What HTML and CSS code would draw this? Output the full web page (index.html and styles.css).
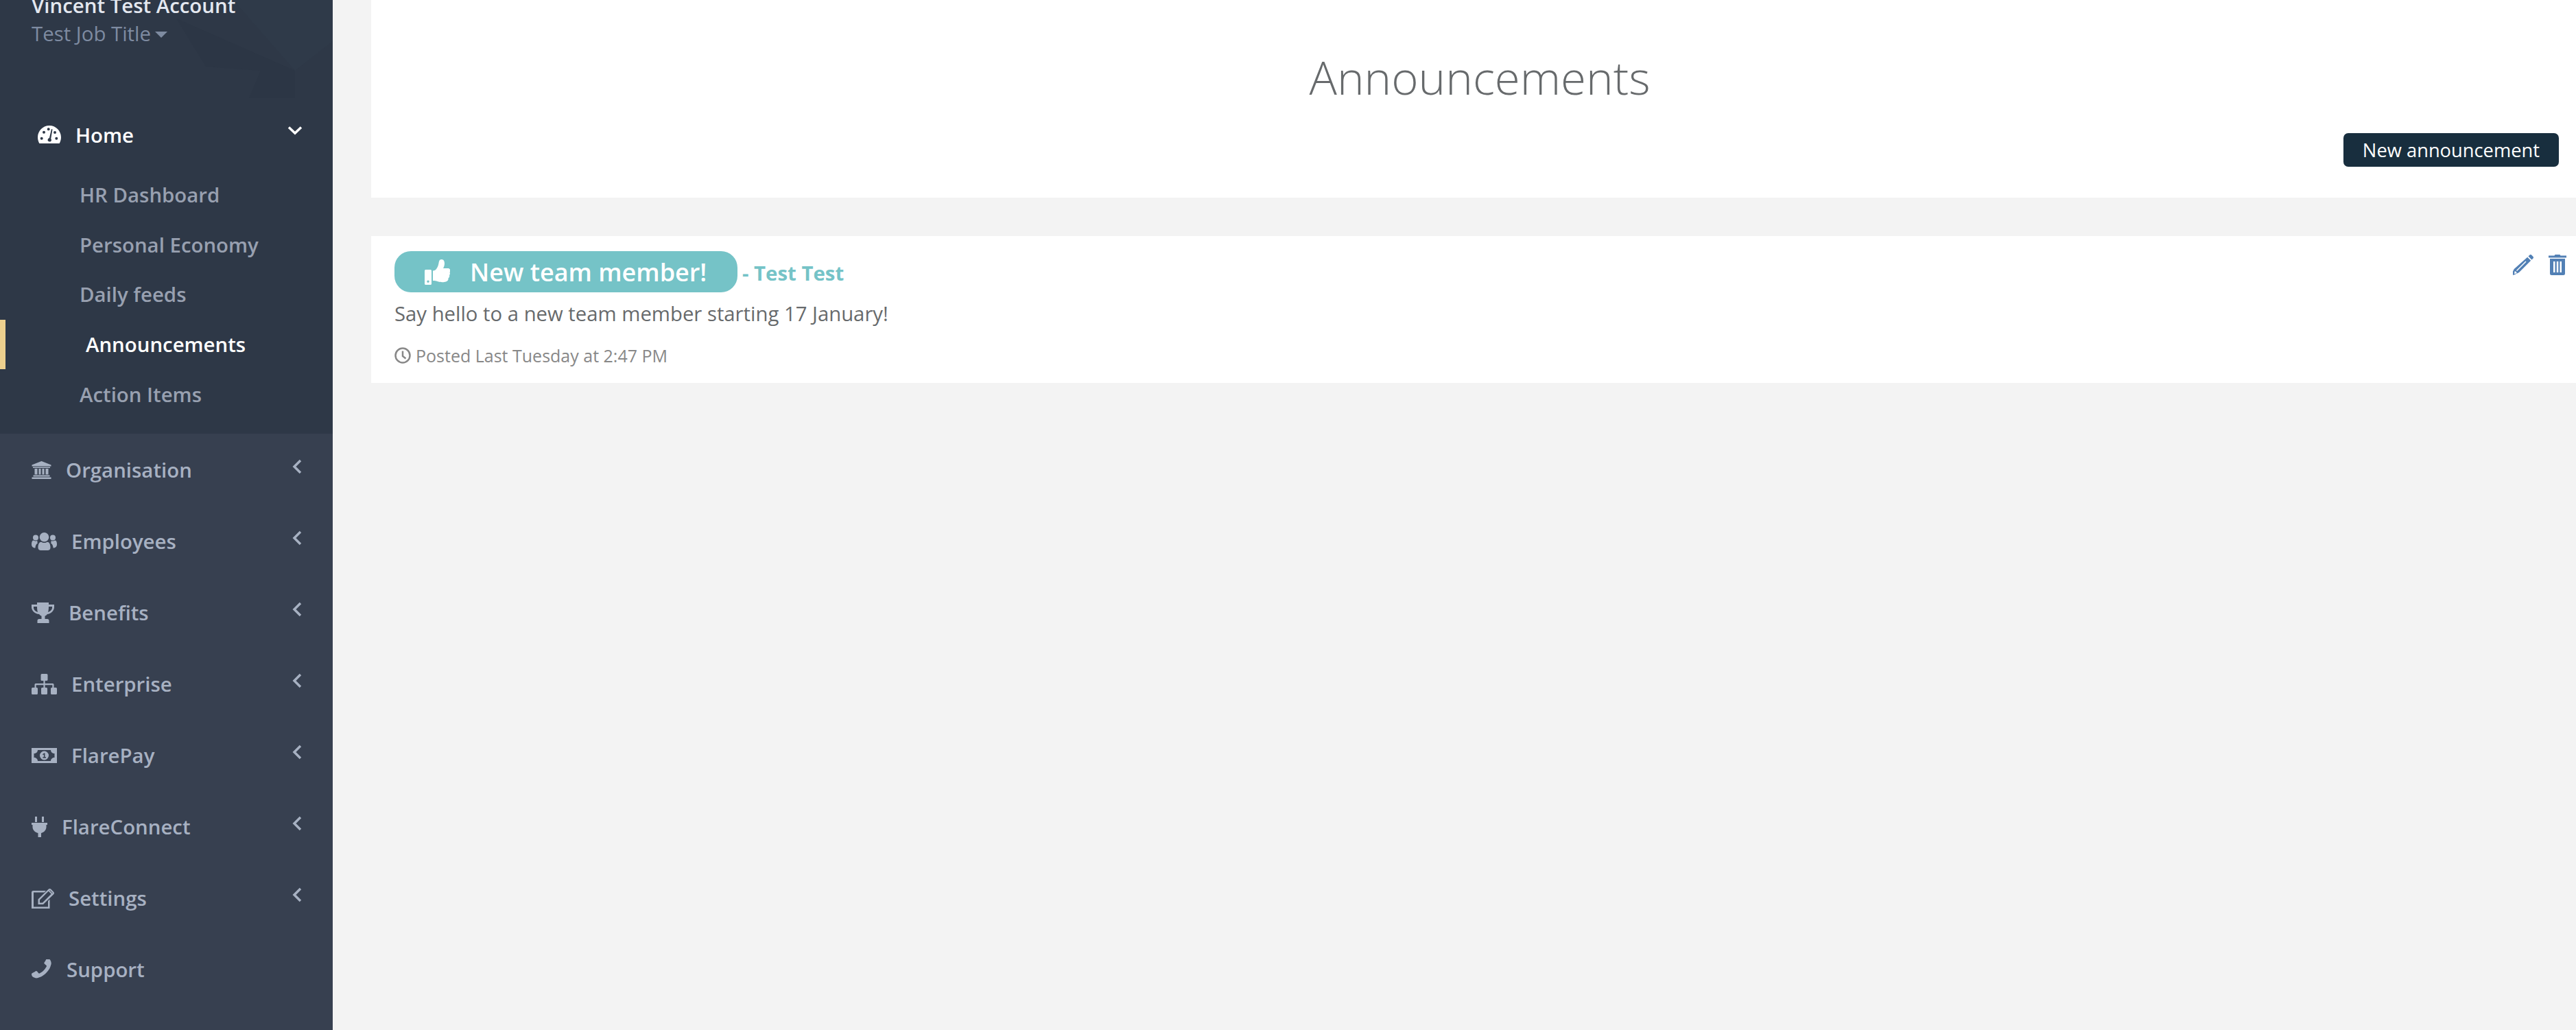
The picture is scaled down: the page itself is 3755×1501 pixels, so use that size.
FILE: index.html
```html
<!DOCTYPE html>
<html lang="en">
<head>
<meta charset="utf-8">
<title>Announcements</title>
<link rel="stylesheet" href="styles.css">
</head>
<body>
<div class="app">
  <aside class="sidebar">
    <div class="sidebar-top">
      <svg class="deco" viewBox="0 0 485 150" aria-hidden="true">
        <polygon points="257,27 430,103 430,143 363,143 380,103 300,97" fill="#2c3645"/>
        <polygon points="340,0 430,103 485,60 485,0" fill="#2f3a49"/>
      </svg>
      <div class="profile">
        <div class="profile-name">Vincent Test Account</div>
        <div class="profile-job">Test Job Title<span class="caret"></span></div>
      </div>
      <a class="home-row">
        <svg class="home-icon" viewBox="0 0 34 26"><path fill-rule="evenodd" d="M17 0C7.6 0 0 7.6 0 17c0 3.3.9 6.4 2.4 9h29.2c1.5-2.6 2.4-5.7 2.4-9C34 7.600 26.400 0 17 0zM15.700 3.300a2 2 0 1 1 0 4 2 2 0 0 1 0-4zM9 7.700a2 2 0 1 1 0 4 2 2 0 0 1 0-4zM5.700 16.700a2 2 0 1 1 0 4 2 2 0 0 1 0-4zM27.300 16.700a2 2 0 1 1 0 4 2 2 0 0 1 0-4zM25 8a2 2 0 1 1 0 4 2 2 0 0 1 0-4zM20 5l1.500.4-2.300 13.800c.8.8 1 2 .5 3-.7 1.300-2.600 1.700-3.900.9-1.300-.8-1.600-2.500-.8-3.700.4-.7 1.100-1.100 1.900-1.200z"/></svg>
        <span class="home-label">Home</span>
        <svg class="chev-down" viewBox="0 0 22 14"><path d="M2 2.500l9 8.500 9-8.500"/></svg>
      </a>
      <nav class="subnav">
        <a class="sub-item">HR Dashboard</a>
        <a class="sub-item">Personal Economy</a>
        <a class="sub-item">Daily feeds</a>
        <a class="sub-item sub-item-active">Announcements</a>
        <a class="sub-item">Action Items</a>
      </nav>
    </div>
    <nav class="mainnav">
      <a class="nav-item">
        <svg class="icon icon-bank" viewBox="0 0 28 26"><path d="M14 0l14 5.500V7.500H0V5.500zM1.500 8.500h25v1.500h-25zM4 11h4v8.500H4zM10 11h3v8.500h-3zM15 11h3v8.500h-3zM20 11h4v8.500h-4zM2 20.500h24v2H2zM0 23.500h28V26H0z"/></svg>
        <span>Organisation</span>
        <svg class="chev-left" viewBox="0 0 14 22"><path d="M12 2L3 11l9 9"/></svg>
      </a>
      <a class="nav-item">
        <svg class="icon icon-users" viewBox="0 0 37 26"><circle cx="18.500" cy="6.800" r="6.800"/><path d="M9.500 22c0-5 1.800-8.300 4.600-8.300 1.300.9 2.800 1.400 4.400 1.400s3.100-.5 4.400-1.400c2.800 0 4.600 3.300 4.600 8.300 0 2.600-1.700 4-4 4H13.500c-2.300 0-4-1.400-4-4z"/><circle cx="6" cy="7.500" r="4"/><circle cx="31" cy="7.500" r="4"/><path d="M0 17c0-3.500 1-5.500 3-5.500 1 .7 2 1 3 1 1 0 1.600-.2 2.700-.8-.6 1.400-.4 2.700.3 3.800-2 1-3.300 3.200-3.600 7C2.500 22.500 0 21 0 17zM37 17c0-3.500-1-5.500-3-5.500-1 .7-2 1-3 1-1 0-1.600-.2-2.700-.8.600 1.400.400 2.700-.3 3.800 2 1 3.300 3.200 3.600 7 2.900 0 5.400-1.500 5.400-5.500z"/></svg>
        <span>Employees</span>
        <svg class="chev-left" viewBox="0 0 14 22"><path d="M12 2L3 11l9 9"/></svg>
      </a>
      <a class="nav-item">
        <svg class="icon icon-trophy" viewBox="0 0 33 30"><path fill-rule="evenodd" d="M8 0h17v3h8v4c0 5-5 9.500-10 10-1 1.300-2.200 2.200-3.500 2.800V24h3.500c1.500 0 2.500 1 2.500 2.500V30H8.500v-3.500C8.500 25 9.500 24 11 24h3.500v-4.200C13.200 19.200 12 18.300 11 17 5 16.500 0 12 0 7V3h8zM3 6v1.500c0 3 2.500 5.500 6 6.500-.7-2.300-1-5-1-8zM30 6h-5c0 3-.3 5.700-1 8 3.500-1 6-3.500 6-6.500z"/></svg>
        <span>Benefits</span>
        <svg class="chev-left" viewBox="0 0 14 22"><path d="M12 2L3 11l9 9"/></svg>
      </a>
      <a class="nav-item">
        <svg class="icon icon-sitemap" viewBox="0 0 37 30"><path d="M13.500 1.500A1.500 1.500 0 0 1 15 0h7a1.500 1.500 0 0 1 1.500 1.500v7A1.500 1.500 0 0 1 22 10h-2.400v4H31a1.500 1.500 0 0 1 1.500 1.500V20H30.300v-3.800h-10.700V20h-2.200v-3.800H6.700V20H4.500v-4.500A1.500 1.500 0 0 1 6 14h11.400v-4H15a1.500 1.500 0 0 1-1.500-1.500zM0 21.500A1.500 1.500 0 0 1 1.500 20h6A1.500 1.500 0 0 1 9 21.500v7A1.500 1.500 0 0 1 7.500 30h-6A1.500 1.500 0 0 1 0 28.500zM14 21.500a1.500 1.500 0 0 1 1.500-1.500h6a1.500 1.500 0 0 1 1.500 1.500v7a1.500 1.500 0 0 1-1.500 1.500h-6a1.500 1.500 0 0 1-1.500-1.500zM28 21.500a1.500 1.500 0 0 1 1.500-1.500h6a1.500 1.500 0 0 1 1.500 1.500v7a1.500 1.500 0 0 1-1.500 1.500h-6a1.500 1.500 0 0 1-1.500-1.500z"/></svg>
        <span>Enterprise</span>
        <svg class="chev-left" viewBox="0 0 14 22"><path d="M12 2L3 11l9 9"/></svg>
      </a>
      <a class="nav-item">
        <svg class="icon icon-money" viewBox="0 0 37 22"><path fill-rule="evenodd" d="M0 0h37v22H0zM9 3c0 3-2.500 5-5.500 5v6c3 0 5.500 2 5.500 5h19c0-3 2.500-5 5.500-5V8c-3 0-5.500-2-5.500-5z"/><path fill-rule="evenodd" d="M18.500 4.500a6.500 6.500 0 1 1 0 13 6.500 6.500 0 0 1 0-13zM19.500 7.500h-1.300l-2.200 1.700.8 1.100 1.100-.8v3.800h-1.500v1.400h4.600v-1.400h-1.500z"/></svg>
        <span>FlarePay</span>
        <svg class="chev-left" viewBox="0 0 14 22"><path d="M12 2L3 11l9 9"/></svg>
      </a>
      <a class="nav-item">
        <svg class="icon icon-plug" viewBox="0 0 23 30"><path d="M5 0h3v8H5zM15 0h3v8h-3zM0 9h23v3h-1.500v3c0 4.500-3.300 8.200-7.500 8.900V30H9.500v-6.100C5 23.200 1.500 19.500 1.500 15v-3H0z"/></svg>
        <span>FlareConnect</span>
        <svg class="chev-left" viewBox="0 0 14 22"><path d="M12 2L3 11l9 9"/></svg>
      </a>
      <a class="nav-item">
        <svg class="icon icon-edit" viewBox="0 0 33 29"><path fill-rule="evenodd" d="M2.500 3H21l-2.500 2.500H3V26.500h21V18l2.500-2.500V29H0V5.500A2.500 2.500 0 0 1 2.500 3zM26.500 0c.7 0 1.300.3 1.800.8l3.900 3.900c.500.5.800 1.100.800 1.800s-.3 1.300-.8 1.800L17 23H9.500v-7.500L24.700.8C25.200.3 25.800 0 26.500 0zM24.700 3.800L12 16.500v4h4L28.700 7.800zM26.500 2.300l-.5.200 4.500 4.500.2-.5c0-.3-.1-.4-.2-.6l-3.400-3.400c-.2-.2-.4-.2-.6-.2z"/></svg>
        <span>Settings</span>
        <svg class="chev-left" viewBox="0 0 14 22"><path d="M12 2L3 11l9 9"/></svg>
      </a>
      <a class="nav-item">
        <svg class="icon icon-phone" viewBox="128 192 1472 1472"><path transform="matrix(-1 0 0 1 1728 0)" d="M1600 1240q0 27-10 70.500t-21 68.500q-21 50-122 106-94 51-186 51-27 0-53-3.500t-57.500-12.500-47-14.500-55.500-20.500-49-18q-98-35-175-83-127-79-264-216t-216-264q-48-77-83-175-3-9-18-49t-20.500-55.500-14.500-47-12.500-57.500-3.500-53q0-92 51-186 56-101 106-122 25-11 68.500-21t70.500-10q14 0 21 3 18 6 53 76 11 19 30 54t35 63.500 31 53.500q3 4 17.500 25t21.500 35.500 7 28.500q0 20-28.500 50t-62 55-62 53-28.500 46q0 9 5 22.500t8.500 20.500 14 24 11.500 19q76 137 174 235t235 174q2 1 19 11.500t24 14 20.500 8.500 22.500 5q18 0 46-28.500t53-62 55-62 50-28.500q14 0 28.500 7t35.500 21.500 25 17.500q25 15 53.500 31t63.500 35 54 30q70 35 76 53 3 7 3 21z"/></svg>
        <span>Support</span>
      </a>
    </nav>
  </aside>
  <main class="content">
    <header class="panel">
      <h1 class="page-title">Announcements</h1>
      <div class="panel-actions"><button class="btn-new">New announcement</button></div>
    </header>
    <article class="card">
      <div class="card-head">
        <span class="badge">
          <svg class="thumb" viewBox="0 0 37 37"><path fill-rule="evenodd" d="M1.500 15h7A1.500 1.500 0 0 1 10 16.500v19A1.500 1.500 0 0 1 8.500 37h-7A1.500 1.500 0 0 1 0 35.500v-19A1.500 1.500 0 0 1 1.500 15zM5 30.500a1.700 1.700 0 1 0 0 3.400 1.700 1.700 0 0 0 0-3.400z"/><path d="M12 16.500c3 0 4.500-1.500 6-4 1.500-2.500 2-4.500 2.500-7 .4-2.500 1-5.500 4-5.500 3.500 0 4.500 3 4.500 6 0 2.500-.8 5-2 7h7c2 0 3.500 1.500 3.500 3.500 0 1-.4 1.900-1 2.500.6 1 .8 2.700-.5 4 .500 1.500 0 3.300-1.500 4.200.3 2.300-.7 4.300-3.500 5.300-3 1-8.500 1-12.500-.5-2-.7-3.500-1-6.500-1z"/></svg>
          <span>New team member!</span>
        </span>
        <span class="author">- Test Test</span>
        <div class="card-tools">
          <svg class="tool-pencil" viewBox="0 0 30 30"><path fill-rule="evenodd" d="M24.500.5c.8-.7 1.900-.7 2.600 0l2.400 2.400c.7.700.7 1.800 0 2.600l-2 2-5-5zM21.200 3.800l5 5L9 26l-6 3-3 1v-5.500l1.800-3.500zM18.500 9.500L5 23l1 1 13.500-13.500zM2.700 24.200L2 28l3.700-.8c0-1.500-1.300-2.900-3-3z"/></svg>
          <svg class="tool-trash" viewBox="0 0 26 30"><path fill-rule="evenodd" d="M9.500 0h7l1 1.500H26v3H0v-3h8.500zM2 6h22v21.500a2.500 2.500 0 0 1-2.500 2.500h-17A2.500 2.500 0 0 1 2 27.500zM7 10v16h2.500V10zM11.800 10v16h2.500V10zM16.500 10v16H19V10z"/></svg>
        </div>
      </div>
      <p class="card-body">Say hello to a new team member starting 17 January!</p>
      <p class="card-meta">
        <svg class="clock" viewBox="0 0 24 24"><circle cx="12" cy="12" r="10.500"/><path d="M12 5.500V13l4.500 3.500"/></svg>
        <span>Posted Last Tuesday at 2:47 PM</span>
      </p>
    </article>
  </main>
</div>
</body>
</html>
```

FILE: styles.css
```css
* { box-sizing: border-box; }
html, body { margin: 0; padding: 0; height: 100%; }
body {
  background: #f3f3f3;
  font-family: "Open Sans", "Liberation Sans", sans-serif;
  color: #676a6c;
}
.app { display: flex; height: 1501px; overflow: hidden; }

.sidebar {
  width: 485px;
  flex: none;
  background: #374050;
  display: flex;
  flex-direction: column;
}
.sidebar-top { position: relative; background: #2e3847; height: 632px; }
.deco { position: absolute; top: 0; left: 0; width: 485px; height: 150px; }

.profile { position: relative; display: flow-root; height: 145px; padding-left: 46px; }
.profile-name {
  margin-top: -11px;
  font-size: 29.400px;
  line-height: 38px;
  font-weight: 600;
  color: #e4e8f0;
}
.profile-job {
  margin-top: 3px;
  font-size: 29.400px;
  line-height: 38px;
  color: #7e8ba1;
  display: flex;
  align-items: center;
}
.caret {
  margin-left: 6px;
  margin-top: 3px;
  border-top: 9px solid #7e8ba1;
  border-left: 9px solid transparent;
  border-right: 9px solid transparent;
}

.home-row {
  position: relative;
  height: 103px;
  padding: 0 44px 0 55px;
  display: flex;
  align-items: center;
  color: #fff;
  font-size: 29.400px;
  font-weight: 600;
}
.home-icon { width: 34px; height: 26px; fill: #fff; margin-right: 21px; margin-top: -2px; }
.home-label { flex: 1; }
.chev-down {
  width: 22px;
  height: 14px;
  margin-top: -13px;
  fill: none;
  stroke: #fff;
  stroke-width: 3.5;
}

.subnav { position: relative; }
.sub-item {
  display: flex;
  align-items: center;
  height: 72.600px;
  padding-left: 116px;
  font-size: 29.400px;
  font-weight: 600;
  color: #98a0b0;
}
.sub-item-active {
  border-left: 8px solid #edd08e;
  padding-left: 117px;
  color: #fff;
}

.mainnav { display: flex; flex-direction: column; padding-top: 1px; }
.nav-item {
  height: 104px;
  padding: 0 45px 0 46px;
  display: flex;
  align-items: center;
  gap: 21px;
  color: #a7b1c2;
  font-size: 29.400px;
  font-weight: 600;
}
.nav-item span { flex: 1; }
.icon { fill: #a7b1c2; flex: none; }
.icon-bank { width: 29px; height: 26px; }
.icon-users { width: 37px; height: 26px; }
.icon-trophy { width: 33px; height: 30px; }
.icon-sitemap { width: 37px; height: 30px; }
.icon-money { width: 37px; height: 22px; }
.icon-plug { width: 23px; height: 30px; }
.icon-edit { width: 33px; height: 29px; }
.icon-phone { width: 30px; height: 30px; }
.chev-left {
  width: 14px;
  height: 22px;
  margin-top: -10px;
  fill: none;
  stroke: #a7b1c2;
  stroke-width: 3.5;
  flex: none;
}

.content { flex: 1; min-width: 0; padding-left: 56px; }
.panel {
  height: 288px;
  background: #fff;
  padding: 0 25px 45px 0;
  display: flex;
  flex-direction: column;
  justify-content: flex-end;
}
.page-title {
  margin: 0 0 34px;
  padding-left: 43px;
  text-align: center;
  font-size: 67.200px;
  line-height: 96px;
  font-weight: 300;
  color: #676a6c;
}
.panel-actions { display: flex; justify-content: flex-end; }
.btn-new {
  height: 49px;
  padding: 0 28px;
  border: 0;
  border-radius: 7px;
  background: #182e3e;
  color: #fff;
  font-family: inherit;
  font-size: 27.300px;
}

.card {
  margin-top: 56px;
  height: 214px;
  background: #fff;
  padding: 22px 14px 0 34px;
}
.card-head { display: flex; align-items: center; height: 60px; }
.badge {
  width: 500px;
  height: 60px;
  border-radius: 24px;
  background: #75c3c7;
  color: #fff;
  font-size: 36px;
  font-weight: 600;
  display: flex;
  align-items: center;
  padding-left: 44px;
  gap: 29px;
}
.thumb { width: 37px; height: 37px; fill: #fff; }
.author {
  margin-left: 7px;
  margin-top: 3px;
  color: #75c3c7;
  font-size: 29.400px;
  font-weight: 700;
}
.card-tools {
  margin-left: auto;
  margin-top: -20px;
  display: flex;
  gap: 22px;
}
.tool-pencil { width: 30px; height: 30px; fill: #5280b5; }
.tool-trash { width: 26px; height: 30px; fill: #5280b5; }
.card-body {
  margin: 11px 0 0;
  font-size: 29.300px;
  line-height: 41px;
  color: #676a6c;
}
.card-meta {
  margin: 22px 0 0;
  display: flex;
  align-items: center;
  gap: 7px;
  font-size: 25px;
  line-height: 36px;
  color: #888;
}
.clock { width: 24px; height: 24px; fill: none; stroke: #888; stroke-width: 2.500; }
```
